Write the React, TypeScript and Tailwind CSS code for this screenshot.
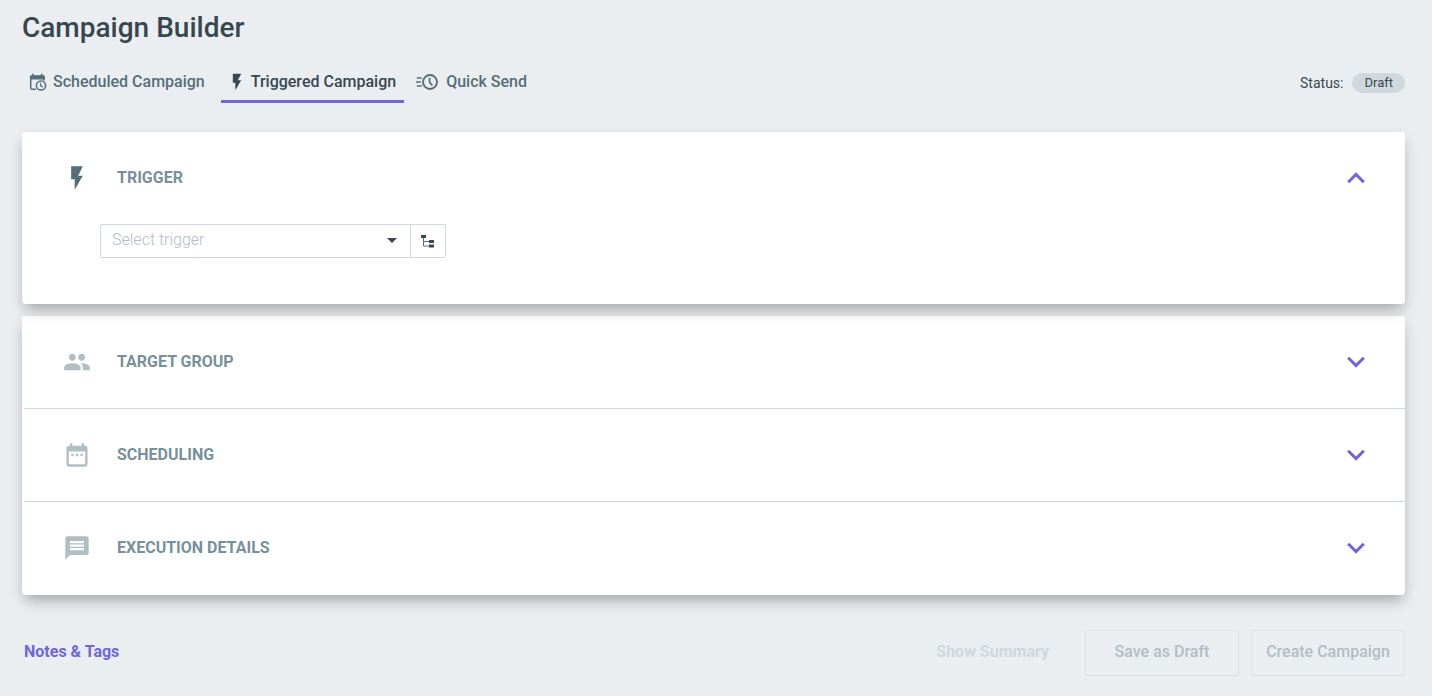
import { useState } from 'react'
import type { ReactNode } from 'react'
import clsx from 'clsx'
import { MdDateRange, MdFlashOn, MdMessage, MdPeople } from 'react-icons/md'

const cardShadow =
  'shadow-[0_8px_12px_-4px_rgba(0,0,0,0.2),0_7px_16px_0_rgba(0,0,0,0.12)]'

function ScheduleIcon() {
  return (
    <svg width="18" height="18" viewBox="0 0 18 18" fill="none" stroke="currentColor" aria-hidden="true">
      <path d="M7 16.2H3.2a1.5 1.5 0 0 1-1.5-1.5V3.5H15v4" strokeWidth="1.5" />
      <path d="M1 6.5V3.8A1.5 1.5 0 0 1 2.5 2.3h11.7a1.5 1.5 0 0 1 1.5 1.5v2.7z" fill="currentColor" stroke="none" />
      <path d="M4 .7v2.5M12.7.7v2.5" strokeWidth="1.6" />
      <circle cx="12" cy="12.5" r="4.6" strokeWidth="1.5" />
      <path d="M11.7 10v2.8l2.2 1.3" strokeWidth="1.2" />
    </svg>
  )
}

function QuickSendIcon() {
  return (
    <svg width="22" height="18" viewBox="0 0 22 18" fill="none" stroke="currentColor" aria-hidden="true">
      <path d="M.8 5h5M0 9h4.8M.8 13h5" strokeWidth="1.6" />
      <circle cx="14" cy="9" r="7" strokeWidth="1.9" />
      <path d="M13.6 4.8v4.6l2.8 3" strokeWidth="1.7" />
    </svg>
  )
}

function TreeIcon() {
  return (
    <svg width="14" height="14" viewBox="0 0 14 14" aria-hidden="true">
      <path d="M0 1h5v3H0zM8 6h5v3H8zM8 10.5h5v3H8z" fill="#37474f" />
      <path d="M2.5 4v8H8M2.5 7.5H8" fill="none" stroke="#546e7a" />
    </svg>
  )
}

function Chevron({ open }: { open?: boolean }) {
  return (
    <svg
      width="18"
      height="12"
      viewBox="0 0 18 12"
      fill="none"
      stroke="#6f66de"
      strokeWidth="3"
      aria-hidden="true"
      className={clsx(open && 'rotate-180')}>
      <path d="M1.2 1.8 9 9.6l7.8-7.8" />
    </svg>
  )
}

type SectionHeaderProps = {
  icon: ReactNode
  title: string
  open?: boolean
  onClick?: () => void
}

function SectionHeader({ icon, title, open, onClick }: SectionHeaderProps) {
  return (
    <h2>
      <button
        type="button"
        aria-expanded={!!open}
        onClick={onClick}
        className="flex h-[92px] w-full items-center pl-[39px] pr-10 text-left">
        <span className={open ? 'text-[#546e7a]' : 'text-[#b0bec5]'}>{icon}</span>
        <span className="ml-[26px] flex-1 pb-px text-base font-bold text-[#78909c]">
          {title}
        </span>
        <Chevron open={open} />
      </button>
    </h2>
  )
}

const tabs = [
  { name: 'Scheduled Campaign', icon: <ScheduleIcon />, style: 'gap-1.5 pl-[7px] pr-4' },
  { name: 'Triggered Campaign', icon: <MdFlashOn size={20} />, style: 'gap-1 pl-1.5 pr-2' },
  { name: 'Quick Send', icon: <QuickSendIcon />, style: 'gap-2 pl-3 pr-3' }
]

const sections = [
  { title: 'TARGET GROUP', icon: <MdPeople size={28} /> },
  { title: 'SCHEDULING', icon: <MdDateRange size={28} /> },
  { title: 'EXECUTION DETAILS', icon: <MdMessage size={28} /> }
]

export default function App() {
  const [tab, setTab] = useState('Triggered Campaign')
  const [triggerOpen, setTriggerOpen] = useState(true)

  return (
    <main className="min-h-screen bg-[#ebeef1] pb-5 pl-[22px] pr-[27px] pt-2 font-['Roboto',sans-serif] text-[#37474f]">
      <h1 className="text-[28px] font-medium leading-10">Campaign Builder</h1>

      <div className="mt-4 flex items-start justify-between">
        <nav className="flex">
          {tabs.map(t => (
            <button
              key={t.name}
              type="button"
              onClick={() => setTab(t.name)}
              className={clsx(
                'flex h-[39px] items-center border-b-[3px] text-base font-medium',
                t.style,
                tab === t.name
                  ? 'border-[#6f66de] text-[#37474f]'
                  : 'border-transparent text-[#546e7a]'
              )}>
              {t.icon}
              {t.name}
            </button>
          ))}
        </nav>
        <div className="mt-[9px] flex items-center gap-[9px] text-sm">
          <span>Status:</span>
          <span className="rounded-full bg-[#cfd8dc] px-3 text-[13px] leading-5">Draft</span>
        </div>
      </div>

      <section className={clsx('relative z-10 mt-[29px] rounded bg-white pl-0.5', cardShadow)}>
        <SectionHeader
          icon={<MdFlashOn size={28} />}
          title="TRIGGER"
          open={triggerOpen}
          onClick={() => setTriggerOpen(!triggerOpen)}
        />
        {triggerOpen && (
          <div className="flex pb-[46px] pl-[76px]">
            <div className="relative w-[311px]">
              <select
                aria-label="Select trigger"
                defaultValue=""
                className="h-[34px] w-full appearance-none rounded-l-xs border border-[#cfd8dc] bg-white pb-0.5 pl-[11px] text-base font-light text-[#b0bec5]">
                <option value="">Select trigger</option>
              </select>
              <svg
                width="10"
                height="5"
                viewBox="0 0 10 5"
                aria-hidden="true"
                className="pointer-events-none absolute right-3.5 top-3.5">
                <path d="M0 0h10L5 5z" fill="#37474f" />
              </svg>
            </div>
            <button
              type="button"
              aria-label="Browse triggers"
              className="flex h-[34px] w-[35px] items-center justify-center rounded-r-xs border border-l-0 border-[#cfd8dc]">
              <TreeIcon />
            </button>
          </div>
        )}
      </section>

      <section className={clsx('mt-3 divide-y divide-[#cfd8dc] rounded-b bg-white pb-px pl-0.5', cardShadow)}>
        {sections.map(s => (
          <SectionHeader key={s.title} icon={s.icon} title={s.title} />
        ))}
      </section>

      <footer className="mt-[35px] flex items-center text-base font-medium">
        <button type="button" className="ml-0.5 pb-0.5 font-bold text-[#6f66de]">
          Notes &amp; Tags
        </button>
        <button type="button" disabled className="ml-auto mr-9 pb-0.5 font-bold text-[#cfd8dc]">
          Show Summary
        </button>
        <button
          type="button"
          disabled
          className="mr-3 h-[46px] w-[154px] rounded-xs border border-[#e0e0e0] pb-0.5 text-[#b0bec5]">
          Save as Draft
        </button>
        <button
          type="button"
          disabled
          className="h-[46px] w-[154px] rounded-xs border border-[#e0e0e0] pb-0.5 text-[#b0bec5]">
          Create Campaign
        </button>
      </footer>
    </main>
  )
}
